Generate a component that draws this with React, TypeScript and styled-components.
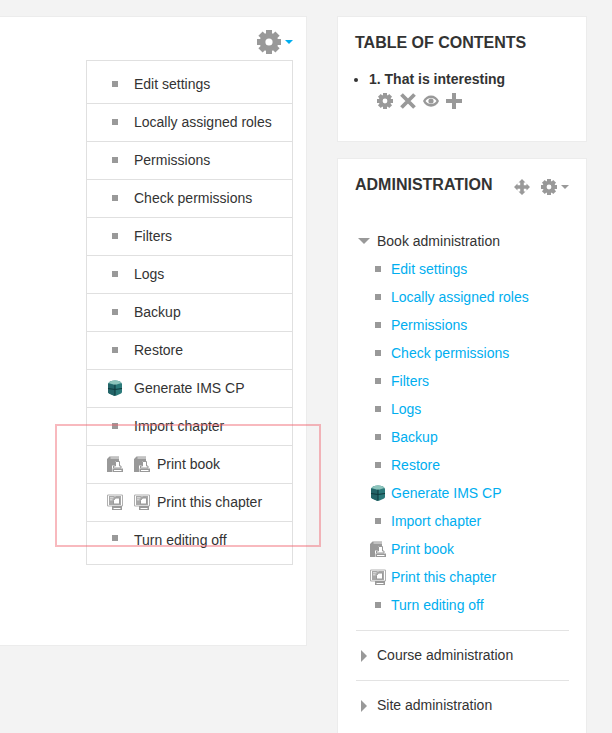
import styled, { createGlobalStyle } from "styled-components"

const GlobalStyle = createGlobalStyle`
    html, body {
        margin: 0;
        height: 733px;
        overflow: hidden;
        background: #f3f3f3;
        font-family: "Liberation Sans", Arial, sans-serif;
        font-size: 14px;
        color: #333;
    }
`

const GearIcon = ({ size = 16, color = "#999" }: { size?: number; color?: string }) => (
    <svg width={size} height={size} viewBox="0 0 16 16" style={{ display: "block" }}>
        <circle cx="8" cy="8" r="4.3" fill="none" stroke={color} strokeWidth="3.8" />
        {[0, 45, 90, 135, 180, 225, 270, 315].map((a) => (
            <rect key={a} x="6" y="0" width="4" height="3.4" fill={color} transform={`rotate(${a} 8 8)`} />
        ))}
    </svg>
)

const CloseIcon = () => (
    <svg width="16" height="16" viewBox="0 0 16 16" style={{ display: "block" }}>
        <path d="M1.5 1.5 L14.5 14.5 M14.5 1.5 L1.5 14.5" stroke="#999" strokeWidth="3.8" />
    </svg>
)

const EyeIcon = () => (
    <svg width="16" height="16" viewBox="0 0 16 16" style={{ display: "block" }}>
        <path d="M0 8 C3 0.5 13 0.5 16 8 C13 15.5 3 15.5 0 8 Z" fill="#999" />
        <path d="M2.5 8 C5 4 11 4 13.5 8 C11 12 5 12 2.5 8 Z" fill="#fff" />
        <circle cx="8" cy="8" r="2.6" fill="#999" />
    </svg>
)

const PlusIcon = () => (
    <svg width="16" height="16" viewBox="0 0 16 16" style={{ display: "block" }}>
        <path d="M8 0 V16 M0 8 H16" stroke="#999" strokeWidth="4" />
    </svg>
)

const MoveIcon = () => (
    <svg width="16" height="16" viewBox="0 0 16 16" style={{ display: "block" }}>
        <path
            d="M8 0 L11.5 3.5 H9.8 V6.2 H12.5 V4.5 L16 8 L12.5 11.5 V9.8 H9.8 V12.5 H11.5 L8 16 L4.5 12.5 H6.2 V9.8 H3.5 V11.5 L0 8 L3.5 4.5 V6.2 H6.2 V3.5 H4.5 Z"
            fill="#999"
        />
    </svg>
)

const CubeIcon = () => (
    <svg width="16" height="16" viewBox="0 0 16 16" style={{ display: "block" }}>
        <path d="M3 1.5 Q8 -0.5 13 1.5 L15 3.5 V12 Q15 13 13.5 13.8 L9 15.8 H7 L2.5 13.8 Q1 13 1 12 V3.5 Z" fill="#2b7a7a" />
        <path d="M3 1.5 Q8 -0.5 13 1.5 L14.5 3 L8 5 L1.5 3 Z" fill="#8cc4bc" />
        <path d="M1 3.5 L8 5.2 V15.8 L7 15.8 L2.5 13.8 Q1 13 1 12 Z" fill="#236468" />
        <path d="M8 4.5 V15.5 M1 8.5 L8 9.5 L15 8.5" stroke="#0f3a3e" strokeWidth="1.1" fill="none" />
    </svg>
)

const BookPrintIcon = () => (
    <svg width="16" height="16" viewBox="0 0 16 16" style={{ display: "block" }}>
        <path d="M0 3 L2.5 0.5 H12 V5 H8 V9.5 H5 V16 H0 Z" fill="#999" />
        <path d="M3.5 2 H12" stroke="#fff" strokeWidth="0.8" />
        <path d="M8.5 5.5 H12.5 V10 H14 V12 H6.5 V10 H8.5 Z" fill="#fff" stroke="#999" strokeWidth="1" />
        <path d="M5.5 12.5 H16 V16 H5.5 Z" fill="#999" />
        <path d="M7 14 H14.5 V15 H7 Z" fill="#fff" />
    </svg>
)

const ChapterPrintIcon = () => (
    <svg width="16" height="16" viewBox="0 0 16 16" style={{ display: "block" }}>
        <path d="M0.5 1 H15.5 V12 H0.5 Z" fill="#fff" stroke="#b0b0b0" strokeWidth="1" />
        <path d="M2 2 H7.5 L8 3 L8.5 2 H14 V11 H2 Z" fill="#a8a8a8" />
        <path d="M3 3.5 H6.5 V4.3 H3 Z M3 5.5 H5.5 V6.3 H3 Z" fill="#fff" />
        <path d="M8.5 4 H12.5 V10 H6.5 V6.5 Z" fill="#fff" stroke="#999" strokeWidth="1" />
        <path d="M5 12 H15 V16 H5 Z" fill="#999" />
        <path d="M6.5 14 H13.5 V15 H6.5 Z" fill="#fff" />
    </svg>
)

const Page = styled.div`
    display: flex;
    align-items: flex-start;
    gap: 30px;
    padding-top: 16px;
    width: 587px;
`

const MainPanel = styled.section`
    box-sizing: border-box;
    flex: 0 0 307px;
    height: 630px;
    background: #fff;
    border: 1px solid #ececec;
    border-left: 0;
    padding: 13px 13px 0 0;
    display: flex;
    flex-direction: column;
    align-items: flex-end;
`

const Trigger = styled.div`
    display: flex;
    align-items: center;
    gap: 4px;
    height: 24px;
    margin-bottom: 6px;
`

const Caret = styled.span<{ $color: string }>`
    width: 0;
    height: 0;
    border-left: 4px solid transparent;
    border-right: 4px solid transparent;
    border-top: 4px solid ${({ $color }) => $color};
`

const Menu = styled.ul`
    box-sizing: border-box;
    width: 207px;
    margin: 0;
    padding: 0;
    list-style: none;
    border: 1px solid #e0e0e0;
`

const MenuRow = styled.li<{ $first?: boolean; $last?: boolean }>`
    box-sizing: border-box;
    display: flex;
    align-items: ${({ $last }) => ($last ? "flex-start" : "center")};
    height: ${({ $first, $last }) => ($first ? 43 : $last ? 42 : 38)}px;
    padding: ${({ $first, $last }) => ($first ? "4px" : $last ? "8px" : "0")} 0 ${({ $first, $last }) => ($first || $last ? "0" : "2px")} 20px;
    gap: 11px;
    line-height: 20px;
    color: #333;
    border-bottom: ${({ $last }) => ($last ? "0" : "1px solid #e0e0e0")};
`

const IconSlot = styled.span`
    flex: 0 0 16px;
    width: 16px;
    height: 16px;
    display: flex;
    align-items: center;
    justify-content: center;
`

const TightSlot = styled(IconSlot)`
    margin-right: -4px;
`

const Bullet = styled.span`
    display: block;
    width: 6px;
    height: 6px;
    background: #999;
`

const Side = styled.aside`
    flex: 0 0 250px;
    display: flex;
    flex-direction: column;
    gap: 16px;
`

const Block = styled.section<{ $height: number }>`
    box-sizing: border-box;
    height: ${({ $height }) => $height}px;
    background: #fff;
    border: 1px solid #ececec;
    padding: 16px 17px 0 17px;
`

const BlockTitle = styled.h2`
    margin: 0;
    font-size: 16px;
    line-height: 19px;
    font-weight: 700;
    color: #333;
`

const TocList = styled.ul`
    margin: 17px 0 0;
    padding: 0 0 0 14px;
`

const TocItem = styled.li`
    font-weight: 700;
    line-height: 20px;
`

const TocActions = styled.div`
    display: flex;
    gap: 7px;
    margin: 4px 0 0 8px;
`

const AdminHead = styled.div`
    display: flex;
    justify-content: space-between;
    height: 44px;
`

const AdminIcons = styled.div`
    display: flex;
    align-items: center;
    gap: 4px;
    height: 16px;
    margin-top: 4px;
`

const MoveWrap = styled.span`
    margin-right: 7px;
`

const TreeHead = styled.div`
    display: flex;
    align-items: center;
    gap: 6px;
    height: 28px;
    padding-left: 3px;
    margin-top: 8px;
`

const TriangleDown = styled.span`
    width: 0;
    height: 0;
    margin-right: 1px;
    border-left: 6px solid transparent;
    border-right: 6px solid transparent;
    border-top: 6px solid #999;
`

const TreeList = styled.ul`
    margin: 0 0 11px;
    padding: 0;
    list-style: none;
`

const TreeRow = styled.li`
    display: flex;
    align-items: center;
    gap: 5px;
    height: 28px;
    padding-left: 15px;
    color: #00aeef;
`

const TreeSlot = styled.span`
    flex: 0 0 16px;
    height: 16px;
    display: flex;
    align-items: center;
    justify-content: center;
`

const Section = styled.div`
    box-sizing: border-box;
    display: flex;
    align-items: center;
    gap: 10px;
    height: 50px;
    margin-left: 1px;
    padding: 0 0 2px 5px;
    border-top: 1px solid #e3e3e3;
`

const TriangleRight = styled.span`
    width: 0;
    height: 0;
    margin-top: 2px;
    border-top: 6px solid transparent;
    border-bottom: 6px solid transparent;
    border-left: 6px solid #999;
`

const Highlight = styled.div`
    position: absolute;
    left: 55px;
    top: 424px;
    width: 262px;
    height: 119px;
    border: 2px solid rgba(240, 100, 110, 0.45);
    pointer-events: none;
`

const menuItems: { label: string; icon?: "cube" | "book" | "chapter" }[] = [
    { label: "Edit settings" },
    { label: "Locally assigned roles" },
    { label: "Permissions" },
    { label: "Check permissions" },
    { label: "Filters" },
    { label: "Logs" },
    { label: "Backup" },
    { label: "Restore" },
    { label: "Generate IMS CP", icon: "cube" },
    { label: "Import chapter" },
    { label: "Print book", icon: "book" },
    { label: "Print this chapter", icon: "chapter" },
    { label: "Turn editing off" },
]

function ItemIcon({ icon }: { icon?: "cube" | "book" | "chapter" }) {
    if (icon === "cube") return <CubeIcon />
    if (icon === "book") return <BookPrintIcon />
    if (icon === "chapter") return <ChapterPrintIcon />
    return <Bullet />
}

export default function App() {
    return (
        <>
            <GlobalStyle />
            <Page>
                <MainPanel>
                    <Trigger>
                        <GearIcon size={24} />
                        <Caret $color="#00aeef" />
                    </Trigger>
                    <Menu>
                        {menuItems.map((item, i) => (
                            <MenuRow key={item.label} $first={i === 0} $last={i === menuItems.length - 1}>
                                <IconSlot>
                                    <ItemIcon icon={item.icon} />
                                </IconSlot>
                                {(item.icon === "book" || item.icon === "chapter") && (
                                    <TightSlot>
                                        <ItemIcon icon={item.icon} />
                                    </TightSlot>
                                )}
                                {item.label}
                            </MenuRow>
                        ))}
                    </Menu>
                </MainPanel>
                <Side>
                    <Block $height={126}>
                        <BlockTitle>TABLE OF CONTENTS</BlockTitle>
                        <TocList>
                            <TocItem>
                                1. That is interesting
                                <TocActions>
                                    <GearIcon />
                                    <CloseIcon />
                                    <EyeIcon />
                                    <PlusIcon />
                                </TocActions>
                            </TocItem>
                        </TocList>
                    </Block>
                    <Block $height={620}>
                        <AdminHead>
                            <BlockTitle>ADMINISTRATION</BlockTitle>
                            <AdminIcons>
                                <MoveWrap>
                                    <MoveIcon />
                                </MoveWrap>
                                <GearIcon />
                                <Caret $color="#999" />
                            </AdminIcons>
                        </AdminHead>
                        <TreeHead>
                            <TriangleDown />
                            Book administration
                        </TreeHead>
                        <TreeList>
                            {menuItems.map((item) => (
                                <TreeRow key={item.label}>
                                    <TreeSlot>
                                        <ItemIcon icon={item.icon} />
                                    </TreeSlot>
                                    {item.label}
                                </TreeRow>
                            ))}
                        </TreeList>
                        <Section>
                            <TriangleRight />
                            Course administration
                        </Section>
                        <Section>
                            <TriangleRight />
                            Site administration
                        </Section>
                    </Block>
                </Side>
            </Page>
            <Highlight />
        </>
    )
}
